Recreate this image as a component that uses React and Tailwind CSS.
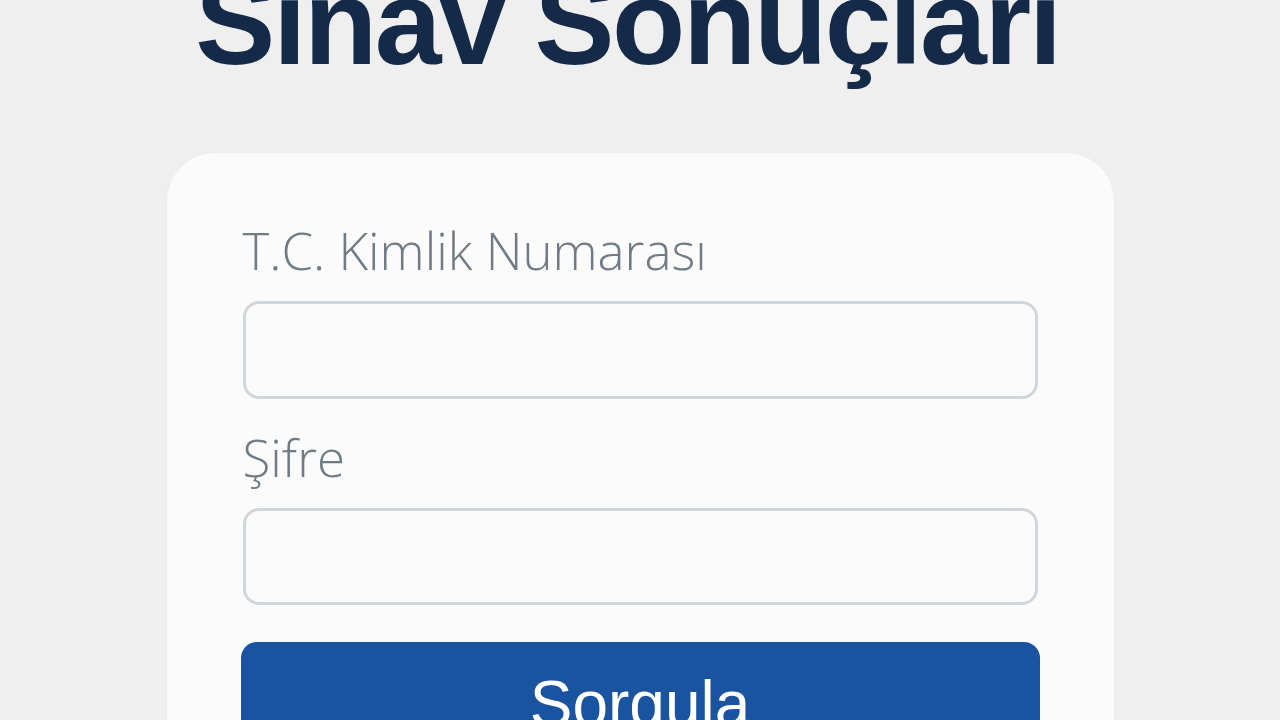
export default function App() {
  return (
    <div className="w-full bg-[#efefef] flex flex-col items-center overflow-hidden" style={{ height: 720 }}>
      <h1
        className="mt-[-38px] mr-[25px] text-[120px] leading-none font-bold tracking-[-0.02em] text-[#142a48] whitespace-nowrap"
        style={{ fontFamily: '"Liberation Sans", Arial, sans-serif' }}
      >
        Sınav Sonuçları
      </h1>
      <div
        className="mt-[71px] w-[947px] shrink-0 rounded-[48px] bg-[#fbfbfb] px-[76px] pt-[72px] pb-[60px] shadow-[0_1px_3px_rgba(0,0,0,0.04)]"
        style={{ fontFamily: '"Open Sans", Lato, sans-serif' }}
      >
        <label className="block text-[51px] leading-none font-light text-[#6f7b86]">
          T.C. Kimlik Numarası
        </label>
        <input
          type="text"
          className="mt-[25px] block h-[98px] w-full rounded-[16px] border-[3px] border-[#d0d6d9] bg-[#fbfbfb] outline-none"
        />
        <label className="mt-[33px] block text-[51px] leading-none font-light text-[#6f7b86]">
          Şifre
        </label>
        <input
          type="password"
          className="mt-[25px] block h-[97px] w-full rounded-[16px] border-[3px] border-[#d0d6d9] bg-[#fbfbfb] outline-none"
        />
        <button
          className="mt-[37px] -mx-[2px] flex h-[100px] w-[calc(100%+4px)] items-start justify-center pt-[30px] rounded-[16px] bg-[#1a53a0] text-[64px] leading-none text-white"
          style={{ fontFamily: '"Liberation Sans", Arial, sans-serif' }}
        >
          Sorgula
        </button>
      </div>
    </div>
  );
}
